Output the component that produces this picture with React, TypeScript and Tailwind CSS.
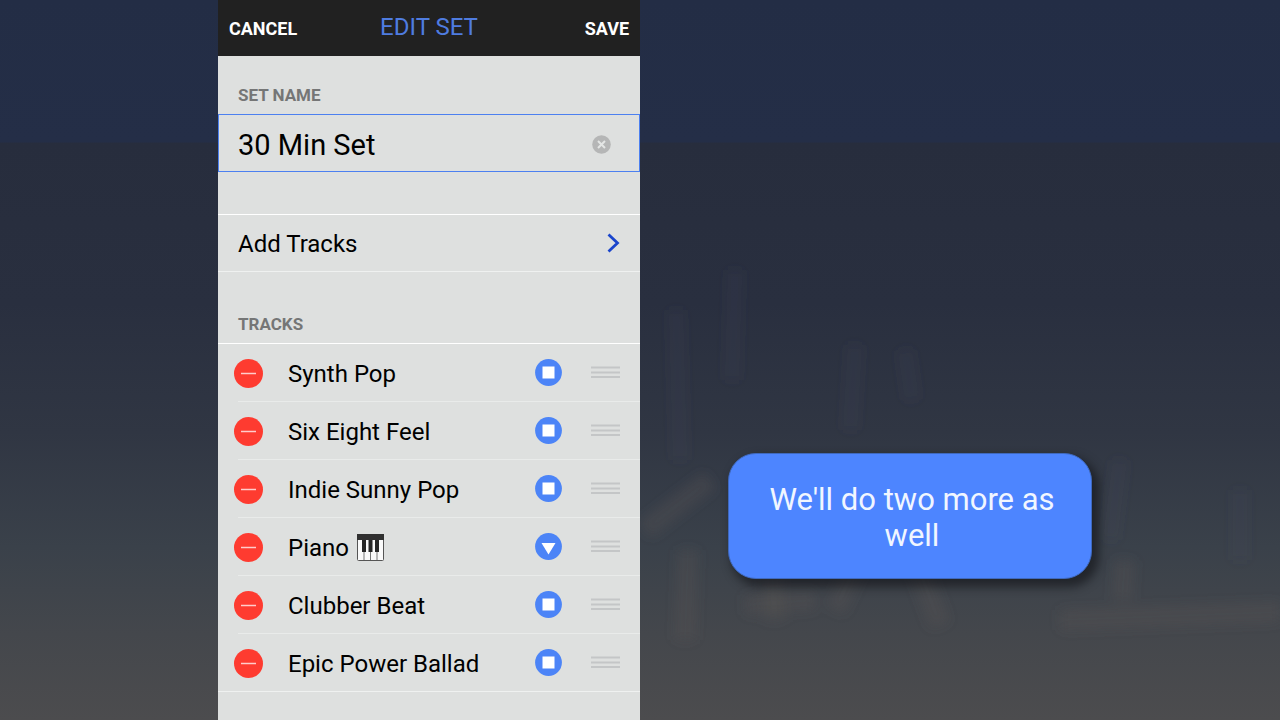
import React, { useState } from 'react';

type TrackKind = 'stop' | 'expand';

interface Track {
  name: string;
  kind: TrackKind;
  piano?: boolean;
}

const TRACKS: Track[] = [
  { name: 'Synth Pop', kind: 'stop' },
  { name: 'Six Eight Feel', kind: 'stop' },
  { name: 'Indie Sunny Pop', kind: 'stop' },
  { name: 'Piano', kind: 'expand', piano: true },
  { name: 'Clubber Beat', kind: 'stop' },
  { name: 'Epic Power Ballad', kind: 'stop' },
];

// Out of focus crowd behind the phone
function Backdrop() {
  return (
    <svg
      className="absolute inset-0 h-full w-full"
      viewBox="0 0 1280 720"
      preserveAspectRatio="none"
      aria-hidden="true"
    >
      <defs>
        <linearGradient id="sky" x1="0" y1="0" x2="0" y2="1">
          <stop offset="0" stopColor="#232d45" />
          <stop offset="0.197" stopColor="#242e47" />
          <stop offset="0.199" stopColor="#272d3d" />
          <stop offset="0.42" stopColor="#292f3f" />
          <stop offset="0.6" stopColor="#303643" />
          <stop offset="0.76" stopColor="#3a414a" />
          <stop offset="0.88" stopColor="#44474c" />
          <stop offset="1" stopColor="#4c4c4e" />
        </linearGradient>
        <filter id="soft" x="-20%" y="-20%" width="140%" height="140%">
          <feGaussianBlur stdDeviation="6" />
        </filter>
      </defs>
      <rect width="1280" height="720" fill="url(#sky)" />
      <g filter="url(#soft)" fill="none">
        <g stroke="#5a5653" strokeOpacity="0.3" strokeWidth="20">
          <path d="M645 530 L710 480" />
          <path d="M688 550 L685 640" />
          <path d="M770 540 L775 620" />
          <path d="M835 610 L868 540" />
          <path d="M910 545 L940 625" />
          <path d="M745 605 L815 600" />
          <path d="M1015 540 L1018 570" />
          <path d="M1125 560 L1122 600" />
          <path d="M1060 620 L1280 612" />
        </g>
        <g stroke="#4a505b" strokeOpacity="0.16" strokeWidth="14">
          <path d="M676 310 L680 460" />
          <path d="M735 270 L732 380" />
          <path d="M855 345 L850 430" />
          <path d="M905 350 L912 400" />
          <path d="M1120 460 L1110 540" />
          <path d="M1240 490 L1240 560" />
        </g>
      </g>
    </svg>
  );
}

function PianoIcon() {
  return (
    <svg className="size-[27px]" viewBox="0 0 27 27" role="img" aria-label="piano">
      <rect x="0.5" y="0.5" width="26" height="26" rx="1" fill="#fafafa" stroke="#555" />
      <path d="M0 0h27v6H0z" fill="#303030" />
      <path d="M7 17v9M13.500 17v9M20 17v9" stroke="#777" strokeWidth="1" />
      <path d="M5 6h4v12H5zM11.500 6h4v12h-4zM18 6h4v12h-4z" fill="#262626" />
    </svg>
  );
}

function TrackButton({ kind, name }: { kind: TrackKind; name: string }) {
  return (
    <button type="button" aria-label={`${kind} ${name}`} className="shrink-0">
      <svg className="block size-[27px]" viewBox="0 0 27 27">
        <circle cx="13.5" cy="13.5" r="13.4" fill="#4c84f7" />
        {kind === 'stop' ? (
          <rect x="7.500" y="7.500" width="12" height="12" fill="#fff" />
        ) : (
          <path d="M6.500 10h14L13.500 21.500z" fill="#fff" />
        )}
      </svg>
    </button>
  );
}

function TrackRow({ track }: { track: Track }) {
  return (
    <li className="group pl-5 last:border-b last:border-[#eff1f0]">
      <div className="flex h-[58px] items-center border-b border-[#e9ebea] pr-5 group-last:h-[57px] group-last:border-b-0">
        <button type="button" aria-label={`Remove ${track.name}`} className="-ml-1 shrink-0 pt-0.5">
          <svg className="block size-[29px]" viewBox="0 0 29 29">
            <circle cx="14.5" cy="14.500" r="14.5" fill="#fe3b30" />
            <path d="M7 14.500h15" stroke="#fff" strokeOpacity="0.75" strokeWidth="1.500" />
          </svg>
        </button>
        <span className="flex flex-1 items-center gap-2 pt-0.5 pl-[25px] text-2xl whitespace-nowrap text-black">
          {track.name}
          {track.piano && <PianoIcon />}
        </span>
        <TrackButton kind={track.kind} name={track.name} />
        <svg className="ml-[29px] h-[13px] w-[29px] shrink-0" viewBox="0 0 29 13" aria-hidden="true">
          <path d="M0 1.500h29M0 6.500h29M0 11h29" stroke="#c4c6c7" strokeWidth="2" />
        </svg>
      </div>
    </li>
  );
}

export default function App() {
  const [setName, setSetName] = useState('30 Min Set');

  return (
    <div className="relative min-h-screen bg-[#272d3d] font-['Roboto',sans-serif]">
      <Backdrop />
      <div className="relative grid min-h-screen grid-cols-[218fr_422fr_640fr]">
        <main className="col-start-2 min-w-0 bg-[#dee0df]">
          <header className="flex h-14 items-center justify-between bg-[#212121] px-[11px] pt-0.5">
            <button type="button" className="flex-1 text-left text-lg font-bold text-white">CANCEL</button>
            <h1 className="pb-1 text-2xl font-normal text-[#4f7ce0]">EDIT SET</h1>
            <button type="button" className="flex-1 text-right text-lg font-bold text-white">SAVE</button>
          </header>

          <label
            htmlFor="set-name"
            className="flex h-[58px] items-end px-5 pb-2 text-[17px] leading-[22px] font-bold text-[#757676]"
          >
            SET NAME
          </label>
          <div className="flex h-[58px] items-center border border-[#4c80f0] pr-7 pl-[19px]">
            <input
              id="set-name"
              type="text"
              value={setName}
              onChange={(e) => setSetName(e.target.value)}
              className="min-w-0 flex-1 bg-transparent pt-1 text-[29px] leading-9 text-black outline-none"
            />
            <button type="button" aria-label="Clear set name" className="pt-0.5" onClick={() => setSetName('')}>
              <svg className="block size-[19px]" viewBox="0 0 19 19">
                <circle cx="9.500" cy="9.500" r="9.300" fill="#b5b6b6" />
                <path d="M6 6l7 7M13 6l-7 7" stroke="#e4e6e5" strokeWidth="2" />
              </svg>
            </button>
          </div>

          <button
            type="button"
            className="mt-[42px] flex h-[58px] w-full items-center justify-between border-t border-b border-t-white border-b-[#eff1f0] px-5 text-2xl text-black"
          >
            <span className="pt-0.5">Add Tracks</span>
            <svg className="h-5 w-[14px]" viewBox="0 0 14 20" fill="none" aria-hidden="true">
              <path d="M2.500 1.500L11.500 10l-9 8.500" stroke="#1a45cc" strokeWidth="2.800" />
            </svg>
          </button>

          <h2 className="flex h-[71px] items-end px-5 pb-2 text-[17px] leading-[22px] font-bold text-[#757676]">
            TRACKS
          </h2>
          <ul className="border-t border-white">
            {TRACKS.map((track) => (
              <TrackRow key={track.name} track={track} />
            ))}
          </ul>
        </main>

        <aside className="flex min-w-0 flex-col">
          <div className="flex-[453]" />
          <p className="mr-auto ml-[88px] max-w-[364px] rounded-[28px] border border-[#3f69be] bg-[#4d85ff] pt-7 pr-8 pb-6 pl-9 text-center text-[31px] leading-9 text-[#f1f6ff] shadow-[5px_6px_10px_2px_rgba(20,22,26,0.65)]">
            We'll do two more as well
          </p>
          <div className="flex-[141]" />
        </aside>
      </div>
    </div>
  );
}
